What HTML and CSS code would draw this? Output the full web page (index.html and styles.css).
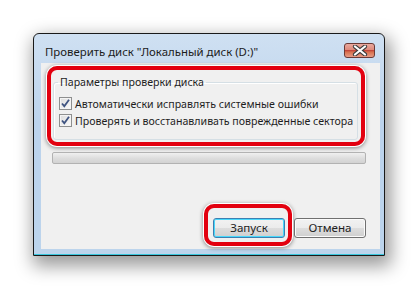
FILE: index.html
```html
<!DOCTYPE html>
<html lang="ru">
<head>
    <meta charset="UTF-8">
    <title>Проверить диск</title>
    <link rel="stylesheet" href="styles.css">
</head>
<body>
    <div class="window">
        <div class="titlebar">
            <div class="title">Проверить диск "Локальный диск (D:)"</div>
            <div class="close">
                <svg width="16" height="11" viewBox="0 0 16 11">
                    <path d="M3 1.5 L13 9.5 M13 1.5 L3 9.5" stroke="#3b3b3b" stroke-width="4.2" stroke-linecap="round"/>
                    <path d="M3 1.5 L13 9.5 M13 1.5 L3 9.5" stroke="#fff" stroke-width="2.2" stroke-linecap="round"/>
                </svg>
            </div>
        </div>

        <div class="client">
            <!-- рамка-выделение вокруг группы -->
            <div class="mark mark-group">
                <fieldset class="group">
                    <legend>Параметры проверки диска</legend>
                    <div class="row"><span class="cb"><svg width="11" height="11" viewBox="0 0 11 11"><path d="M2 5.5 L4.3 8.2 L9 1.8" fill="none" stroke="#3f5481" stroke-width="1.8"/></svg></span>Автоматически исправлять системные ошибки</div>
                    <div class="row"><span class="cb"><svg width="11" height="11" viewBox="0 0 11 11"><path d="M2 5.5 L4.3 8.2 L9 1.8" fill="none" stroke="#3f5481" stroke-width="1.8"/></svg></span>Проверять и восстанавливать поврежденные сектора</div>
                </fieldset>
            </div>

            <div class="progress"></div>

            <div class="buttons">
                <div class="mark mark-btn">
                    <div class="btn btn-default">Запуск</div>
                </div>
                <div class="btn btn-cancel">Отмена</div>
            </div>
        </div>
    </div>
</body>
</html>
```

FILE: styles.css
```css
body {
    margin: 0;
    width: 418px;
    height: 289px;
    overflow: hidden;
    background: #fff;
    font-family: "Noto Sans", "Open Sans", sans-serif;
    font-size: 10.6px;
    color: #1e1e1e;
    white-space: nowrap;
}
.window {
    margin: 33px 0 0 33px;
    width: 352px;
    height: 223px;
    box-sizing: border-box;
    border: 1px solid #1a1a1a;
    border-radius: 6px 6px 0 0;
    background: linear-gradient(#cfe0f2, #bcd3ec 40%, #bcd4ec);
    padding: 0 4px 6px 7px;
    display: flex;
    flex-direction: column;
    box-shadow: 3px 7px 18px 3px rgba(0, 0, 0, 0.4), inset 0 -1px 0 #39c6dc;
}
.titlebar {
    height: 29px;
    display: flex;
    justify-content: space-between;
    align-items: flex-start;
    padding-left: 4px;
}
.title {
    margin-top: 10px;
    line-height: 16px;
    font-size: 11.4px;
    color: #1b1b1b;
}
.close {
    margin-top: 9px;
    margin-right: 5px;
    width: 31px;
    height: 15px;
    box-sizing: border-box;
    border: 1px solid #6b3a36;
    border-radius: 3px;
    background: linear-gradient(#eaa99e, #de8a7c 45%, #c4473a 50%, #d8714f 62%, #e79c86);
    display: flex;
    align-items: center;
    justify-content: center;
}
.client {
    flex: 1;
    background: #f0f0f0;
    padding: 3px 0 0 6px;
    display: flex;
    flex-direction: column;
}
.mark {
    box-sizing: border-box;
    border: 4px solid #e3000f;
    border-radius: 10px;
    box-shadow: 0 0 0 1px #fff, 0 1px 4px 1px rgba(0, 0, 0, 0.45);
}
.mark-group {
    width: 318px;
    height: 80px;
    padding: 4px 0 0 2px;
}
.group {
    margin: 0;
    width: 305px;
    height: 66px;
    box-sizing: border-box;
    border: 1px solid #d5dfe5;
    border-radius: 3px;
    padding: 0 0 0 4px;
    box-shadow: inset 1px 1px 0 #fff;
}
.group legend {
    padding: 0 2px;
    line-height: 16px;
}
.row {
    display: flex;
    align-items: center;
    height: 17px;
    margin-left: 1px;
}
.group legend + .row {
    margin-top: 5px;
}
.cb {
    width: 13px;
    height: 13px;
    box-sizing: border-box;
    border: 1px solid #8e8f8f;
    background: linear-gradient(135deg, #dcdcdc, #fbfbfb);
    box-shadow: inset 0 0 0 1px #f4f4f4;
    margin-right: 3px;
    display: flex;
    align-items: center;
    justify-content: center;
}
.progress {
    margin: 6px 0 0 5px;
    width: 314px;
    height: 12px;
    box-sizing: border-box;
    border: 1px solid #b2b2b2;
    border-radius: 2px;
    background: linear-gradient(#f0f0f0, #dedede 50%, #d2d2d2);
}
.buttons {
    margin-top: 40px;
    display: flex;
    justify-content: flex-end;
    align-items: flex-start;
    padding-right: 14px;
}
.mark-btn {
    width: 88px;
    height: 42px;
    padding: 10px 0 0 5px;
}
.btn {
    width: 72px;
    height: 20px;
    box-sizing: border-box;
    border: 1px solid #707070;
    border-radius: 3px;
    background: linear-gradient(#f2f2f2, #ebebeb 50%, #dddddd 51%, #cfcfcf);
    box-shadow: inset 0 0 0 1px #fbfbfb;
    display: flex;
    align-items: center;
    justify-content: center;
    font-size: 11.6px;
    line-height: 16px;
}
.btn-default {
    border-color: #3c7fb1;
    box-shadow: inset 0 0 0 1px #48d8fb;
}
.btn-cancel {
    margin: 14px 0 0 2px;
}
```
